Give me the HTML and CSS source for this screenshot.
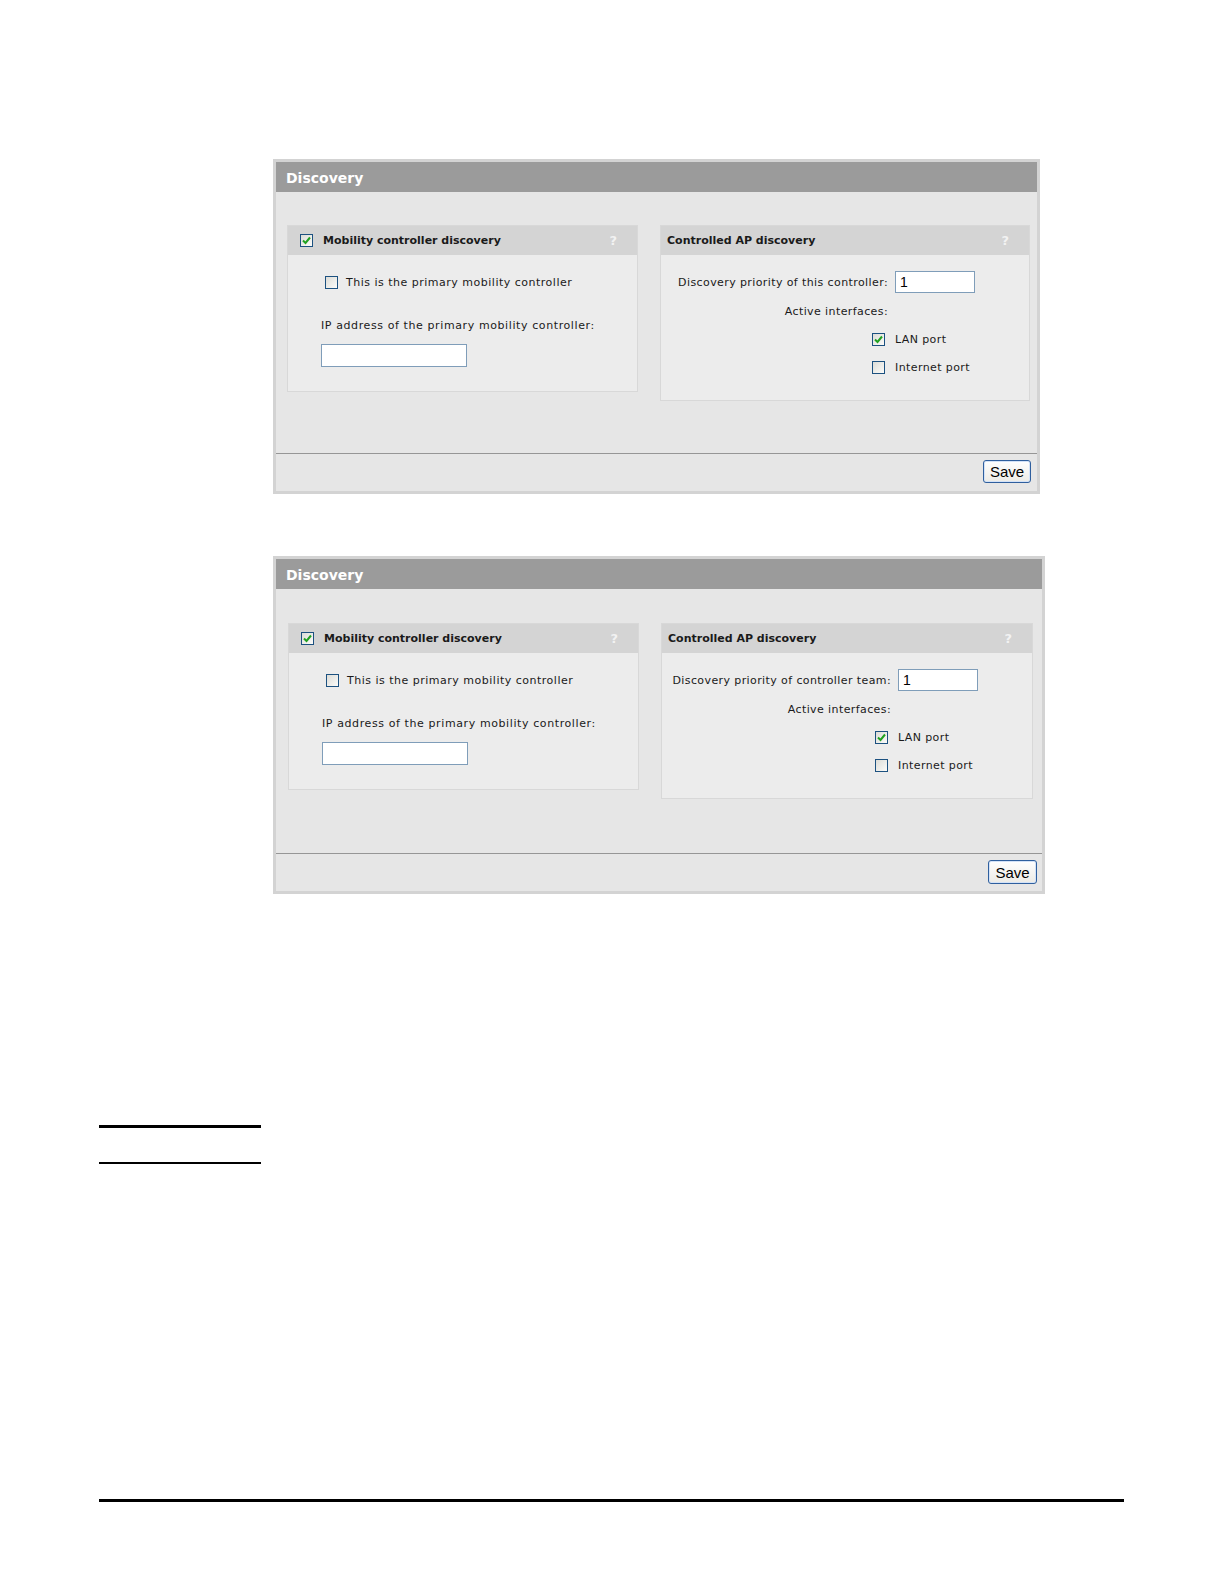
FILE: index.html
```html
<!DOCTYPE html>
<html lang="en">
<head>
<meta charset="UTF-8" />
<meta name="viewport" content="width=device-width, initial-scale=1" />
<title>Discovery</title>
<link rel="stylesheet" href="styles.css">
</head>
<body>
<div class="page">

<!-- Discovery: this controller -->
<div class="panel">
  <div class="panel-head">Discovery</div>
  <div class="panel-body">
    <div class="box box-mc">
      <div class="box-head">
        <span class="cb"><svg class="tick" width="9" height="9" viewBox="0 0 9 9"><path d="M1 4.5 L3.5 7 L8 1.5" /></svg></span>
        <span class="box-title">Mobility controller discovery</span>
        <span class="help">?</span>
      </div>
      <div class="mc-body">
        <div class="cb-row"><span class="cb"></span>This is the primary mobility controller</div>
        <div class="field-label">IP address of the primary mobility controller:</div>
        <div class="input ip-input"></div>
      </div>
    </div>
    <div class="box box-ap">
      <div class="box-head">
        <span class="box-title">Controlled AP discovery</span>
        <span class="help">?</span>
      </div>
      <div class="ap-grid">
        <div class="lbl">Discovery priority of this controller:</div>
        <div class="input prio-input">1</div>
        <div class="lbl">Active interfaces:</div>
        <div></div>
        <div class="lbl"><span class="cb"><svg class="tick" width="9" height="9" viewBox="0 0 9 9"><path d="M1 4.5 L3.5 7 L8 1.5" /></svg></span></div>
        <div class="val">LAN port</div>
        <div class="lbl"><span class="cb"></span></div>
        <div class="val">Internet port</div>
      </div>
    </div>
  </div>
  <div class="panel-foot"><button class="save">Save</button></div>
</div>

<!-- Discovery: controller team -->
<div class="panel panel-alt">
  <div class="panel-head">Discovery</div>
  <div class="panel-body">
    <div class="box box-mc">
      <div class="box-head">
        <span class="cb"><svg class="tick" width="9" height="9" viewBox="0 0 9 9"><path d="M1 4.5 L3.5 7 L8 1.5" /></svg></span>
        <span class="box-title">Mobility controller discovery</span>
        <span class="help">?</span>
      </div>
      <div class="mc-body">
        <div class="cb-row"><span class="cb"></span>This is the primary mobility controller</div>
        <div class="field-label">IP address of the primary mobility controller:</div>
        <div class="input ip-input"></div>
      </div>
    </div>
    <div class="box box-ap">
      <div class="box-head">
        <span class="box-title">Controlled AP discovery</span>
        <span class="help">?</span>
      </div>
      <div class="ap-grid">
        <div class="lbl">Discovery priority of controller team:</div>
        <div class="input prio-input">1</div>
        <div class="lbl">Active interfaces:</div>
        <div></div>
        <div class="lbl"><span class="cb"><svg class="tick" width="9" height="9" viewBox="0 0 9 9"><path d="M1 4.5 L3.5 7 L8 1.5" /></svg></span></div>
        <div class="val">LAN port</div>
        <div class="lbl"><span class="cb"></span></div>
        <div class="val">Internet port</div>
      </div>
    </div>
  </div>
  <div class="panel-foot"><button class="save">Save</button></div>
</div>

<!-- page rules -->
<div class="rules">
  <div class="rule-short"></div>
  <div class="rule-short thin"></div>
  <div class="rule-long"></div>
</div>

</div>
</body>
</html>
```

FILE: styles.css
```css
body {
  margin: 0;
  background: #fff;
  font-family: "DejaVu Sans", Verdana, sans-serif;
  font-size: 11px;
  color: #1a1a1a;
}

.page {
  padding-top: 159px;
}

/* Panel frame */
.panel {
  box-sizing: border-box;
  width: 767px;
  margin-left: 273px;
  border: 3px solid #d3d3d3;
  background: #e6e6e6;
}

.panel + .panel {
  margin-top: 62px;
}

.panel-head {
  height: 30px;
  line-height: 32px;
  padding-left: 10px;
  background: #9b9b9b;
  color: #fff;
  font-size: 14px;
  font-weight: bold;
}

.panel-body {
  box-sizing: border-box;
  height: 261px;
  display: flex;
  align-items: flex-start;
  gap: 22px;
  padding: 33px 0 0 11px;
}

.panel-foot {
  box-sizing: border-box;
  height: 38px;
  border-top: 1px solid #969696;
  display: flex;
  justify-content: flex-end;
  align-items: flex-start;
  padding: 6px 6px 0 0;
}

.save {
  box-sizing: border-box;
  width: 48px;
  height: 23px;
  padding: 0;
  border: 1px solid #2f5f9e;
  border-radius: 3px;
  background: linear-gradient(#ffffff, #ecebe6);
  box-shadow: inset 0 0 0 1px #d3e2f7;
  font-family: "Liberation Sans", Arial, sans-serif;
  font-size: 15px;
  color: #000;
}

/* Inner boxes */
.box {
  box-sizing: border-box;
  border: 1px solid #d8d8d8;
  background: #ececec;
}

.box-mc {
  width: 351px;
}

.box-ap {
  width: 370px;
}

.box-head {
  height: 29px;
  display: flex;
  align-items: center;
  padding-left: 12px;
  background: #d4d4d4;
}

.box-ap .box-head {
  padding-left: 6px;
}

.box-head .cb {
  margin-right: 10px;
}

.box-title {
  font-weight: bold;
  font-size: 11px;
  color: #1a1a1a;
}

.help {
  margin-left: auto;
  margin-right: 20px;
  font-size: 13px;
  font-weight: bold;
  color: #f2f2f2;
}

/* Checkbox */
.cb {
  box-sizing: border-box;
  flex: none;
  width: 13px;
  height: 13px;
  display: inline-flex;
  align-items: center;
  justify-content: center;
  border: 1px solid #1c5180;
  background: linear-gradient(135deg, #dcdcd7, #fbfbf9);
}

.tick path {
  fill: none;
  stroke: #21a121;
  stroke-width: 2;
}

/* Mobility controller box */
.mc-body {
  padding: 18px 0 24px 33px;
}

.cb-row {
  height: 18px;
  display: flex;
  align-items: center;
  gap: 8px;
  padding-left: 4px;
  letter-spacing: 0.5px;
}

.field-label {
  margin-top: 28px;
  line-height: 14px;
  letter-spacing: 0.6px;
}

.input {
  box-sizing: border-box;
  border: 1px solid #7f9db9;
  background: #fff;
  font-family: "Liberation Sans", Arial, sans-serif;
  font-size: 14px;
  padding-left: 4px;
  color: #000;
}

.ip-input {
  width: 146px;
  height: 23px;
  margin-top: 11px;
}

.prio-input {
  width: 80px;
  height: 22px;
  line-height: 20px;
}

/* Controlled AP box */
.ap-grid {
  display: grid;
  grid-template-columns: 227px 1fr;
  grid-template-rows: 22px 20px 20px 20px;
  column-gap: 7px;
  row-gap: 8px;
  align-items: center;
  padding: 16px 0 23px 0;
  letter-spacing: 0.4px;
}

.lbl {
  text-align: right;
  white-space: nowrap;
  display: flex;
  justify-content: flex-end;
  padding-right: 3px;
}

.lbl:nth-child(1),
.lbl:nth-child(3) {
  padding-right: 0;
}

/* second panel is a slightly larger capture */
.panel-alt {
  width: 772px;
}

.panel-alt .panel-body {
  height: 264px;
  padding: 34px 0 0 12px;
}

.panel-alt .box-ap {
  width: 372px;
}

.panel-alt .ap-grid {
  grid-template-columns: 229px 1fr;
}

.panel-alt .panel-foot {
  padding: 6px 5px 0 0;
}

.panel-alt .save {
  width: 49px;
  height: 24px;
}

/* Page rules */
.rules {
  margin-top: 231px;
  margin-left: 99px;
}

.rule-short {
  width: 162px;
  height: 3px;
  background: #000;
}

.rule-short.thin {
  height: 2px;
  margin-top: 34px;
}

.rule-long {
  width: 1025px;
  height: 3px;
  margin-top: 335px;
  background: #000;
}
```
